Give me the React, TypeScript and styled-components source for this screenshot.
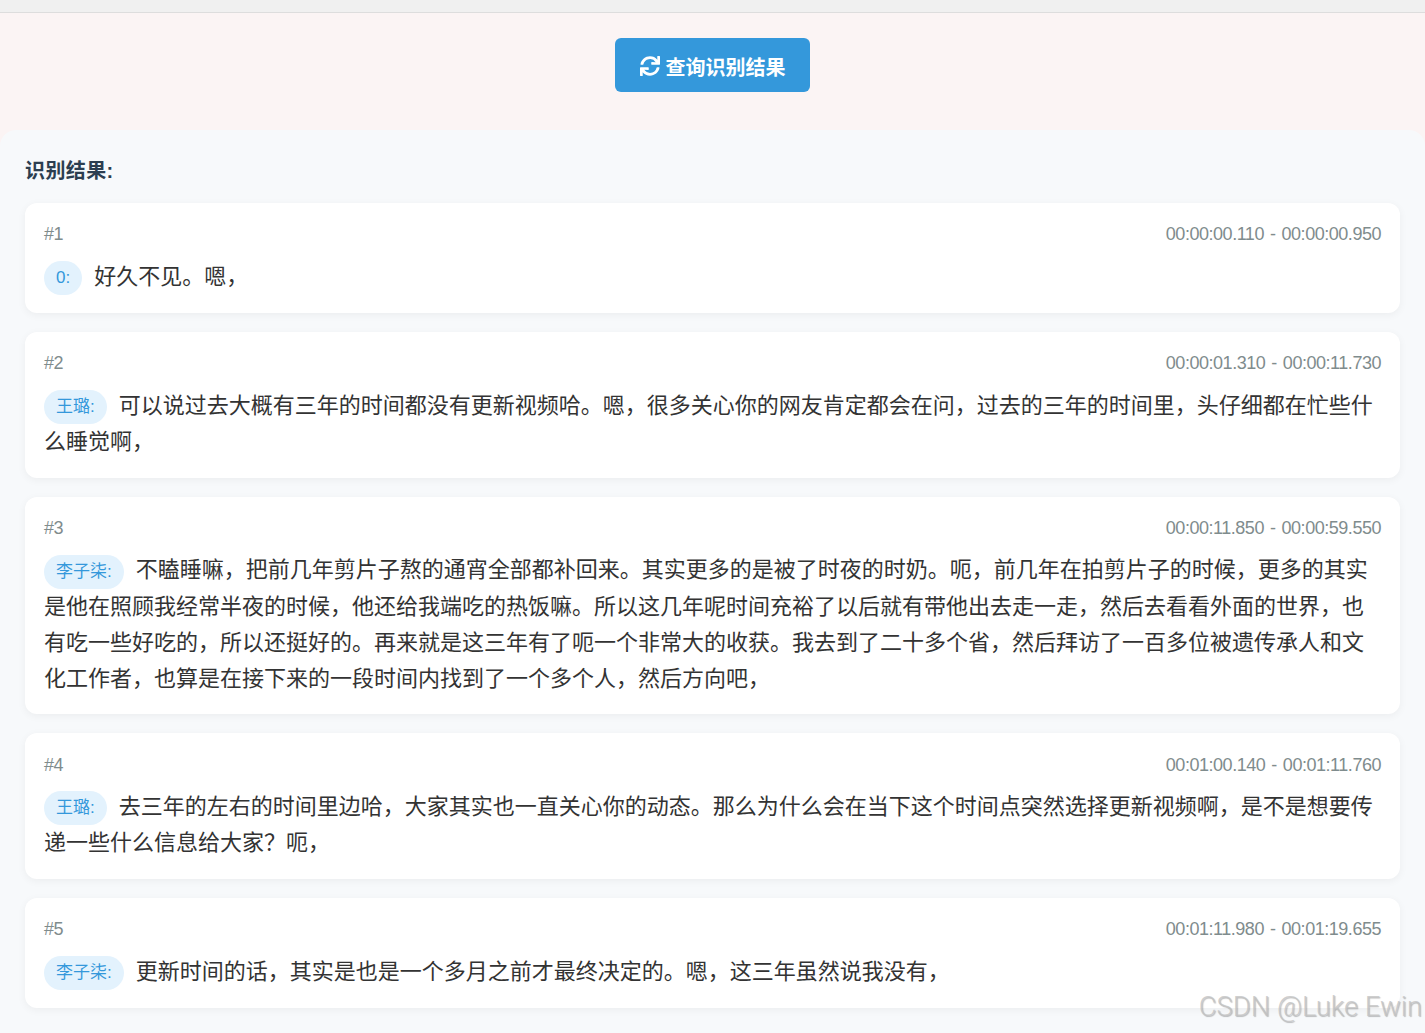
import React from "react";
import styled, { createGlobalStyle } from "styled-components";
import { FaSync } from "react-icons/fa";

const GlobalStyle = createGlobalStyle`
  html, body {
    margin: 0;
    padding: 0;
    background: #fbf4f4;
    font-family: "Liberation Sans", "Noto Sans CJK SC", sans-serif;
  }
`;

const Page = styled.div`
  height: 1033px;
  overflow: hidden;
  position: relative;
`;
const TopBar = styled.div`
  height: 12px;
  background: #f0f0f0;
  border-bottom: 1px solid #dddddd;
`;
const Actions = styled.div`
  display: flex;
  justify-content: center;
  padding: 25px 0 38px;
`;
const QueryButton = styled.button`
  display: flex;
  align-items: center;
  justify-content: center;
  gap: 6px;
  width: 195px;
  height: 54px;
  padding: 2px 0 0;
  border: none;
  border-radius: 6px;
  background: #3498db;
  color: #fff;
  font: 600 20px "Liberation Sans", "Noto Sans CJK SC", sans-serif;
`;
const Panel = styled.section`
  background: #f7f9fb;
  border-radius: 16px 16px 0 0;
  padding: 25px 25px 40px;
`;
const Heading = styled.h3`
  margin: 0 0 16px;
  font-size: 20px;
  line-height: 32px;
  font-weight: 700;
  letter-spacing: 0.4px;
  color: #2c3e50;
`;
const Card = styled.article`
  background: #fff;
  border-radius: 12px;
  box-shadow: 0 2px 8px rgba(0, 0, 0, 0.05);
  padding: 20.4px 19px 17.8px;
  margin-bottom: 19px;
`;
const Meta = styled.div`
  display: flex;
  justify-content: space-between;
  font-size: 18px;
  line-height: 23px;
  letter-spacing: -0.47px;
  word-spacing: 1.5px;
  color: #7f8c8d;
  margin-bottom: 12.4px;
`;
const Body = styled.p`
  margin: 0;
  font-size: 22px;
  line-height: 36px;
  color: #333;
`;
const Speaker = styled.span`
  display: inline-block;
  padding: 0 12px;
  margin-right: 12px;
  border-radius: 17px;
  background: #e3f2fd;
  color: #3498db;
  font-size: 17px;
  line-height: 34px;
  vertical-align: middle;
`;
const Watermark = styled.div`
  position: absolute;
  right: 3px;
  bottom: 10px;
  font-family: Roboto, sans-serif;
  font-size: 27.4px;
  font-weight: 300;
  line-height: 32px;
  color: rgba(195, 195, 195, 0.8);
  text-shadow: 1px 1px 1px rgba(0, 0, 0, 0.25);
`;

const segments = [
  {
    id: 1,
    time: "00:00:00.110 - 00:00:00.950",
    speaker: "0:",
    text: "好久不见。嗯，",
  },
  {
    id: 2,
    time: "00:00:01.310 - 00:00:11.730",
    speaker: "王璐:",
    text: "可以说过去大概有三年的时间都没有更新视频哈。嗯，很多关心你的网友肯定都会在问，过去的三年的时间里，头仔细都在忙些什么睡觉啊，",
  },
  {
    id: 3,
    time: "00:00:11.850 - 00:00:59.550",
    speaker: "李子柒:",
    text: "不瞌睡嘛，把前几年剪片子熬的通宵全部都补回来。其实更多的是被了时夜的时奶。呃，前几年在拍剪片子的时候，更多的其实是他在照顾我经常半夜的时候，他还给我端吃的热饭嘛。所以这几年呢时间充裕了以后就有带他出去走一走，然后去看看外面的世界，也有吃一些好吃的，所以还挺好的。再来就是这三年有了呃一个非常大的收获。我去到了二十多个省，然后拜访了一百多位被遗传承人和文化工作者，也算是在接下来的一段时间内找到了一个多个人，然后方向吧，",
  },
  {
    id: 4,
    time: "00:01:00.140 - 00:01:11.760",
    speaker: "王璐:",
    text: "去三年的左右的时间里边哈，大家其实也一直关心你的动态。那么为什么会在当下这个时间点突然选择更新视频啊，是不是想要传递一些什么信息给大家？呃，",
  },
  {
    id: 5,
    time: "00:01:11.980 - 00:01:19.655",
    speaker: "李子柒:",
    text: "更新时间的话，其实是也是一个多月之前才最终决定的。嗯，这三年虽然说我没有，",
  },
];

export default function App() {
  return (
    <Page>
      <GlobalStyle />
      <TopBar />
      <Actions>
        <QueryButton>
          <FaSync size={20} />
          查询识别结果
        </QueryButton>
      </Actions>
      <Panel>
        <Heading>识别结果:</Heading>
        {segments.map((item) => (
          <Card key={item.id}>
            <Meta>
              <span>#{item.id}</span>
              <span>{item.time}</span>
            </Meta>
            <Body>
              <Speaker>{item.speaker}</Speaker>
              {item.text}
            </Body>
          </Card>
        ))}
      </Panel>
      <Watermark>CSDN @Luke Ewin</Watermark>
    </Page>
  );
}
